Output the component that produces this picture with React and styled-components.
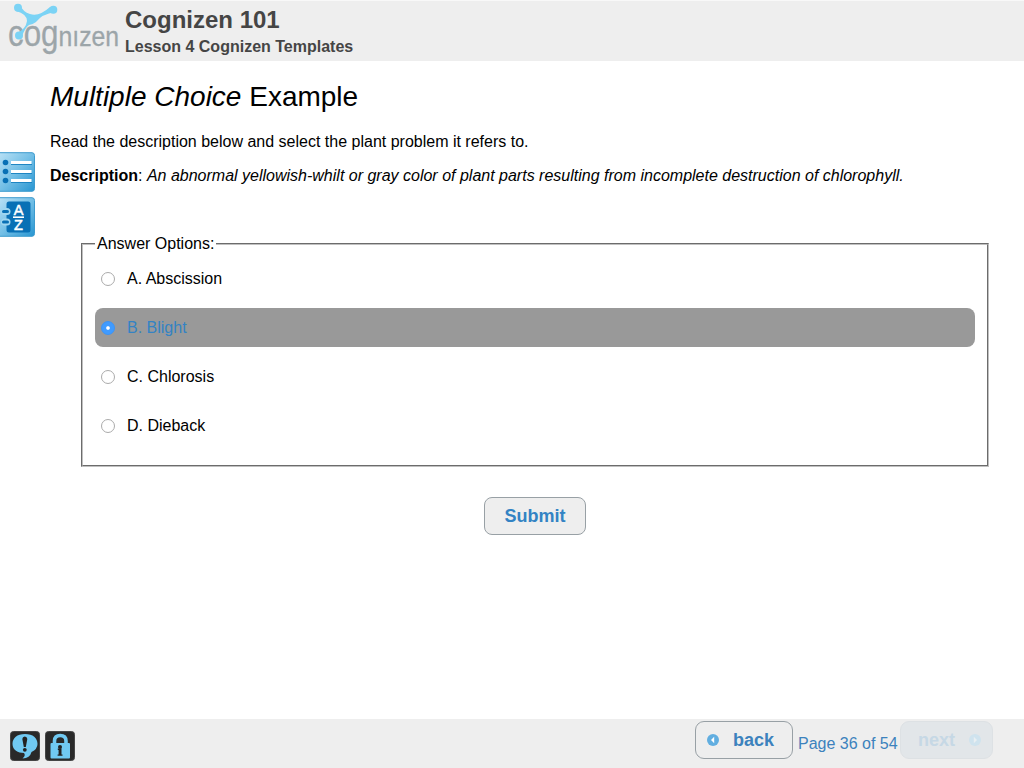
import React, { useState } from "react";
import styled, { createGlobalStyle, css } from "styled-components";

const Global = createGlobalStyle`
  * { box-sizing: border-box; }
  html, body { margin: 0; padding: 0; }
  body { background: #fff; color: #000; font: 16px/20px "Liberation Sans", Arial, sans-serif; }
`;

const Page = styled.div`
  width: 1024px;
  height: 768px;
  display: flex;
  flex-direction: column;
  overflow: hidden;
`;

const Header = styled.header`
  height: 61px;
  flex: none;
  display: flex;
  background: #eee;
  border-top: 1px solid #f8f8f8;
  color: #454545;
`;

const LogoArt = styled.svg`
  width: 125px;
  height: 60px;
  flex: none;
  overflow: visible;
`;

const Course = styled.h1`
  margin: 5px 0 0;
  font-size: 24px;
  line-height: 28px;
`;

const Lesson = styled.h2`
  margin: 3px 0 0;
  font-size: 16px;
  line-height: 20px;
`;

const Body = styled.div`
  flex: 1;
  display: flex;
`;

const SideTabs = styled.nav`
  width: 50px;
  padding-top: 91px;
  display: flex;
  flex-direction: column;
  gap: 5px;
`;

const TabArt = styled.svg`
  width: 36px;
  height: 40px;
  display: block;
`;

const Content = styled.main`
  width: 974px;
`;

const Title = styled.h3`
  margin: 20px 0 0;
  font-size: 28px;
  line-height: 32px;
  font-weight: 400;
`;

const Prompt = styled.p`
  margin: ${(p) => p.$top}px 0 0;
  line-height: 20px;
  white-space: nowrap;
`;

const Options = styled.fieldset`
  width: 908px;
  height: 233px;
  margin: 48px 0 0 31px;
  padding: 5px 12px 0;
  border: 2px groove #c0c0c0;
`;

const Legend = styled.legend`
  padding: 0 2px;
  line-height: 20px;
`;

const Option = styled.label`
  display: flex;
  align-items: center;
  height: 39px;
  margin-bottom: 10px;
  padding-left: 6px;
  border-radius: 8px;
  gap: 12px;
  ${(p) => p.$on && css`background: #999; color: #3383c4;`}
`;

const Radio = styled.input`
  appearance: none;
  width: 14px;
  height: 14px;
  margin: 1px 0 0;
  border: 1px solid #ababab;
  border-radius: 50%;
  background: #fff;
  &:checked {
    border-color: #3b93f5;
    background: radial-gradient(circle, #fff 0 1.3px, #409bff 2.3px);
  }
`;

const Submit = styled.button`
  display: block;
  width: 102px;
  height: 38px;
  margin: 30px 0 0 434px;
  padding: 0;
  border: 1px solid #98a0a5;
  border-radius: 8px;
  background: #eee;
  color: #3383c4;
  font: bold 18px "Liberation Sans", Arial, sans-serif;
`;

const Footer = styled.footer`
  height: 49px;
  flex: none;
  display: flex;
  padding: 2px 31px 0 10px;
  background: #eee;
`;

const Tools = styled.div`
  display: flex;
  gap: 5px;
  padding-top: 9px;
  margin-right: auto;
`;

const ToolArt = styled.svg`
  width: 30px;
  height: 32px;
`;

const NavButton = styled.button`
  display: flex;
  align-items: center;
  justify-content: space-between;
  width: ${(p) => p.$width}px;
  height: 38px;
  padding: ${(p) => p.$pad};
  border: 1px solid #98a0a5;
  border-radius: 9px;
  background: #eee;
  color: #3c82bd;
  font: bold 18px "Liberation Sans", Arial, sans-serif;
  &:disabled {
    border-color: #dde1e4;
    background: #e2e6e9;
    color: #c6d8e5;
  }
`;

const ArrowArt = styled.svg`
  width: 12px;
  height: 12px;
`;

const PageCount = styled.span`
  width: 107px;
  padding: 13px 0 0 5px;
  color: #3c82bd;
  white-space: nowrap;
`;

const Logo = () => (
  <LogoArt viewBox="0 1 125 60">
    <text transform="translate(8 46) scale(.87 1)" fontFamily="Liberation Sans, sans-serif" fontSize="36" fill="#9ca5a9" stroke="#9ca5a9" strokeWidth=".3">
      cog<tspan fontSize="28.5">nızen</tspan>
    </text>
    <path d="M20 5Q23 12 30 14Q39 17 50 7L55 12Q42 14 36 22Q32 25 29 25Q25 28 22 36L17 33Q26 29 27 21Q27 14 16 11Z" fill="#7bd3f5" />
    <circle cx="18" cy="7.7" r="4" fill="#7bd3f5" />
    <circle cx="53.3" cy="9.7" r="4" fill="#7bd3f5" />
    <circle cx="19" cy="35.5" r="4" fill="#7bd3f5" />
  </LogoArt>
);

const TabBase = ({ id, children }) => (
  <TabArt viewBox="0 0 36 40">
    <defs>
      <linearGradient id={id} x1="0" y1="0" x2="1" y2="1">
        <stop offset="0" stopColor="#b9e1f5" />
        <stop offset=".5" stopColor="#73bfe6" />
        <stop offset="1" stopColor="#2795d1" />
      </linearGradient>
    </defs>
    <path d="M-1 .7H32Q34.5 .7 34.5 3.5V36.5Q34.5 39.3 32 39.3H-1Z" fill={`url(#${id})`} stroke="#3d9bce" />
    {children}
  </TabArt>
);

const OutlineTab = () => (
  <TabBase id="outline">
    {[10.5, 19.5, 28.5].map((y) => (
      <g key={y}>
        <circle cx="5.5" cy={y} r="2.8" fill="#0870b5" />
        <path d={`M11 ${y + 1.9}H32`} stroke="#1680c0" />
        <path d={`M11 ${y}H31.5`} stroke="#fff" strokeWidth="3" />
      </g>
    ))}
  </TabBase>
);

const letter = { fontFamily: "Liberation Sans, sans-serif", fontSize: 14.5, fill: "#fff", stroke: "#fff", strokeWidth: 0.5, textAnchor: "middle" };

const GlossaryTab = () => (
  <TabBase id="glossary">
    <rect x="6.5" y="4.5" width="24" height="31" rx="2.5" fill="#0870b5" />
    {[14.5, 25].map((y) => (
      <g key={y}>
        <rect x="1" y={y - 3.5} width="9.5" height="7" rx="3.5" fill="#9fd6f0" />
        <rect x="2" y={y - 1.6} width="7" height="3.2" rx="1.6" fill="#0870b5" />
      </g>
    ))}
    <text x="18.5" y="17.5" {...letter}>A</text>
    <path d="M13 20.2H24" stroke="#fff" strokeWidth="1.6" />
    <text x="18.5" y="32.5" {...letter}>Z</text>
  </TabBase>
);

const ToolBase = ({ children }) => (
  <ToolArt viewBox="0 0 30 32">
    <rect x=".5" y="1.5" width="29" height="29" rx="3" fill="#292929" stroke="#454545" />
    {children}
  </ToolArt>
);

const Arrow = ({ next }) => (
  <ArrowArt viewBox="0 0 12 12">
    <circle cx="6" cy="6" r="6" fill={next ? "#cfe3ee" : "#61aee0"} />
    <path d={next ? "M4.8 2.8L8 6L4.8 9.2Z" : "M7.2 2.8L4 6L7.2 9.2Z"} fill={next ? "#e9eff2" : "#fff"} />
  </ArrowArt>
);

const ANSWERS = ["A. Abscission", "B. Blight", "C. Chlorosis", "D. Dieback"];

export default function App() {
  const [picked, setPicked] = useState(1);
  return (
    <Page>
      <Global />
      <Header>
        <Logo />
        <div>
          <Course>Cognizen 101</Course>
          <Lesson>Lesson 4 Cognizen Templates</Lesson>
        </div>
      </Header>
      <Body>
        <SideTabs>
          <OutlineTab />
          <GlossaryTab />
        </SideTabs>
        <Content>
          <Title><i>Multiple Choice</i> Example</Title>
          <Prompt $top={19}>Read the description below and select the plant problem it refers to.</Prompt>
          <Prompt $top={14}>
            <b>Description</b>: <i>An abnormal yellowish-whilt or gray color of plant parts resulting from incomplete destruction of chlorophyll.</i>
          </Prompt>
          <Options>
            <Legend>Answer Options:</Legend>
            {ANSWERS.map((text, i) => (
              <Option key={text} $on={picked === i}>
                <Radio type="radio" name="answer" checked={picked === i} onChange={() => setPicked(i)} />
                {text}
              </Option>
            ))}
          </Options>
          <Submit>Submit</Submit>
        </Content>
      </Body>
      <Footer>
        <Tools>
          <ToolBase>
            <path d="M15 4C7 4 2.5 8 2.5 14C2.5 20 8 23 14 23Q16 25.5 12.5 28.5Q20 28 21.5 22Q27.5 19 27.5 14C27.5 8 23 4 15 4Z" fill="#70c9f2" />
            <path d="M12.3 9Q12.5 6.5 14.8 6.5Q17.1 6.5 17.3 9L15.8 17H13.8Z" fill="#222" />
            <circle cx="14.8" cy="19.8" r="1.9" fill="#222" />
          </ToolBase>
          <ToolBase>
            <path d="M9.5 15V11Q9.5 5.5 15.2 5.5Q21 5.5 21 11V15" fill="none" stroke="#70c9f2" strokeWidth="3.6" />
            <rect x="5.5" y="13" width="19.5" height="15.5" rx="1" fill="#70c9f2" />
            <path d="M12.8 18.5H16.5V24.5H17.5V25.8H12.6V24.5H13.6V20H12.8Z" fill="#222" />
            <circle cx="15" cy="17" r="2" fill="#222" />
          </ToolBase>
        </Tools>
        <NavButton $width={98} $pad="0 18px 0 11px"><Arrow />back</NavButton>
        <PageCount>Page 36 of 54</PageCount>
        <NavButton $width={93} $pad="0 11px 0 17px" disabled>next<Arrow next /></NavButton>
      </Footer>
    </Page>
  );
}
